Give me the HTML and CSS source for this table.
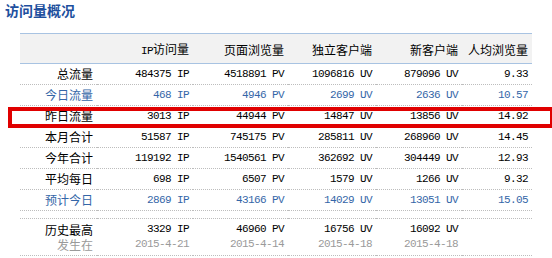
FILE: index.html
```html
<!DOCTYPE html>
<html lang="zh-CN">
<head>
<meta charset="utf-8">
<title>访问量概况</title>
<link rel="stylesheet" href="styles.css">
</head>
<body>
<div class="page">
  <h2 class="title">访问量概况</h2>
  <table class="stats">
    <colgroup>
      <col class="c1"><col class="c2"><col class="c3"><col class="c4"><col class="c5"><col class="c6">
    </colgroup>
    <thead>
      <tr>
        <th></th>
        <th><span class="mono">IP</span>访问量</th>
        <th>页面浏览量</th>
        <th>独立客户端</th>
        <th>新客户端</th>
        <th>人均浏览量</th>
      </tr>
    </thead>
    <tbody>
      <tr>
        <td class="label">总流量</td>
        <td class="num">484375 IP</td><td class="num">4518891 PV</td><td class="num">1096816 UV</td><td class="num">879096 UV</td><td class="num">9.33</td>
      </tr>
      <tr class="blue">
        <td class="label">今日流量</td>
        <td class="num">468 IP</td><td class="num">4946 PV</td><td class="num">2699 UV</td><td class="num">2636 UV</td><td class="num">10.57</td>
      </tr>
      <tr>
        <td class="label">昨日流量</td>
        <td class="num">3013 IP</td><td class="num">44944 PV</td><td class="num">14847 UV</td><td class="num">13856 UV</td><td class="num">14.92</td>
      </tr>
      <tr>
        <td class="label">本月合计</td>
        <td class="num">51587 IP</td><td class="num">745175 PV</td><td class="num">285811 UV</td><td class="num">268960 UV</td><td class="num">14.45</td>
      </tr>
      <tr>
        <td class="label">今年合计</td>
        <td class="num">119192 IP</td><td class="num">1540561 PV</td><td class="num">362692 UV</td><td class="num">304449 UV</td><td class="num">12.93</td>
      </tr>
      <tr>
        <td class="label">平均每日</td>
        <td class="num">698 IP</td><td class="num">6507 PV</td><td class="num">1579 UV</td><td class="num">1266 UV</td><td class="num">9.32</td>
      </tr>
      <tr class="blue">
        <td class="label">预计今日</td>
        <td class="num">2869 IP</td><td class="num">43166 PV</td><td class="num">14029 UV</td><td class="num">13051 UV</td><td class="num">15.05</td>
      </tr>
      <tr class="spacer"><td colspan="6"></td></tr>
      <tr class="peak">
        <td class="label"><div>历史最高</div><div class="sub">发生在</div></td>
        <td class="num"><div>3329 IP</div><div class="sub">2015-4-21</div></td>
        <td class="num"><div>46960 PV</div><div class="sub">2015-4-14</div></td>
        <td class="num"><div>16756 UV</div><div class="sub">2015-4-18</div></td>
        <td class="num"><div>16092 UV</div><div class="sub">2015-4-18</div></td>
        <td class="num"></td>
      </tr>
    </tbody>
  </table>
  <div class="highlight"></div>
</div>
</body>
</html>
```

FILE: styles.css
```css
html, body {
  margin: 0;
  padding: 0;
  background: #ffffff;
}

body {
  font-family: "Noto Sans CJK SC", "Liberation Sans", sans-serif;
  font-size: 12px;
  color: #000;
  width: 552px;
  height: 258px;
  overflow: hidden;
}

.page {
  position: relative;
  padding-top: 2px;
}

.title {
  margin: 0 0 0 5px;
  font-size: 14px;
  line-height: 16px;
  font-weight: bold;
  color: #1d4f9e;
  height: 16px;
}

.stats {
  margin: 15px 0 0 20px;
  width: 512px;
  table-layout: fixed;
  border-collapse: collapse;
  border-spacing: 0;
}

.c1 { width: 77px; }
.c2 { width: 96px; }
.c3 { width: 95px; }
.c4 { width: 88px; }
.c5 { width: 86px; }
.c6 { width: 70px; }

.stats th {
  height: 30px;
  padding: 3px 4px 0 0;
  box-sizing: border-box;
  background: #f2f2f2;
  border-top: 1px solid #a8c3e2;
  border-bottom: 1px solid #a8c3e2;
  text-align: right;
  font-weight: normal;
  line-height: 14px;
  white-space: nowrap;
  vertical-align: middle;
}

.stats td {
  height: 20px;
  padding: 0 4px 0 0;
  text-align: right;
  line-height: 14px;
  white-space: nowrap;
  vertical-align: middle;
  border-bottom: 1px dotted #bdbdbd;
}

.mono,
.num {
  font-family: "Liberation Mono", "DejaVu Sans Mono", monospace;
  font-size: 11px;
  letter-spacing: -0.6px;
}

.label {
  font-family: "Noto Sans CJK SC", sans-serif;
  font-size: 12px;
}

.blue td {
  color: #3466a8;
}

.spacer td {
  height: 7px;
  padding: 0;
  line-height: 0;
}

.peak td {
  height: 33px;
  padding-top: 3px;
  vertical-align: top;
  line-height: 15px;
}

.peak .sub {
  color: #9a9a9a;
}

.highlight {
  position: absolute;
  left: 8px;
  top: 107px;
  width: 546px;
  height: 21px;
  box-sizing: border-box;
  border: 4px solid #e00000;
  pointer-events: none;
}
```
